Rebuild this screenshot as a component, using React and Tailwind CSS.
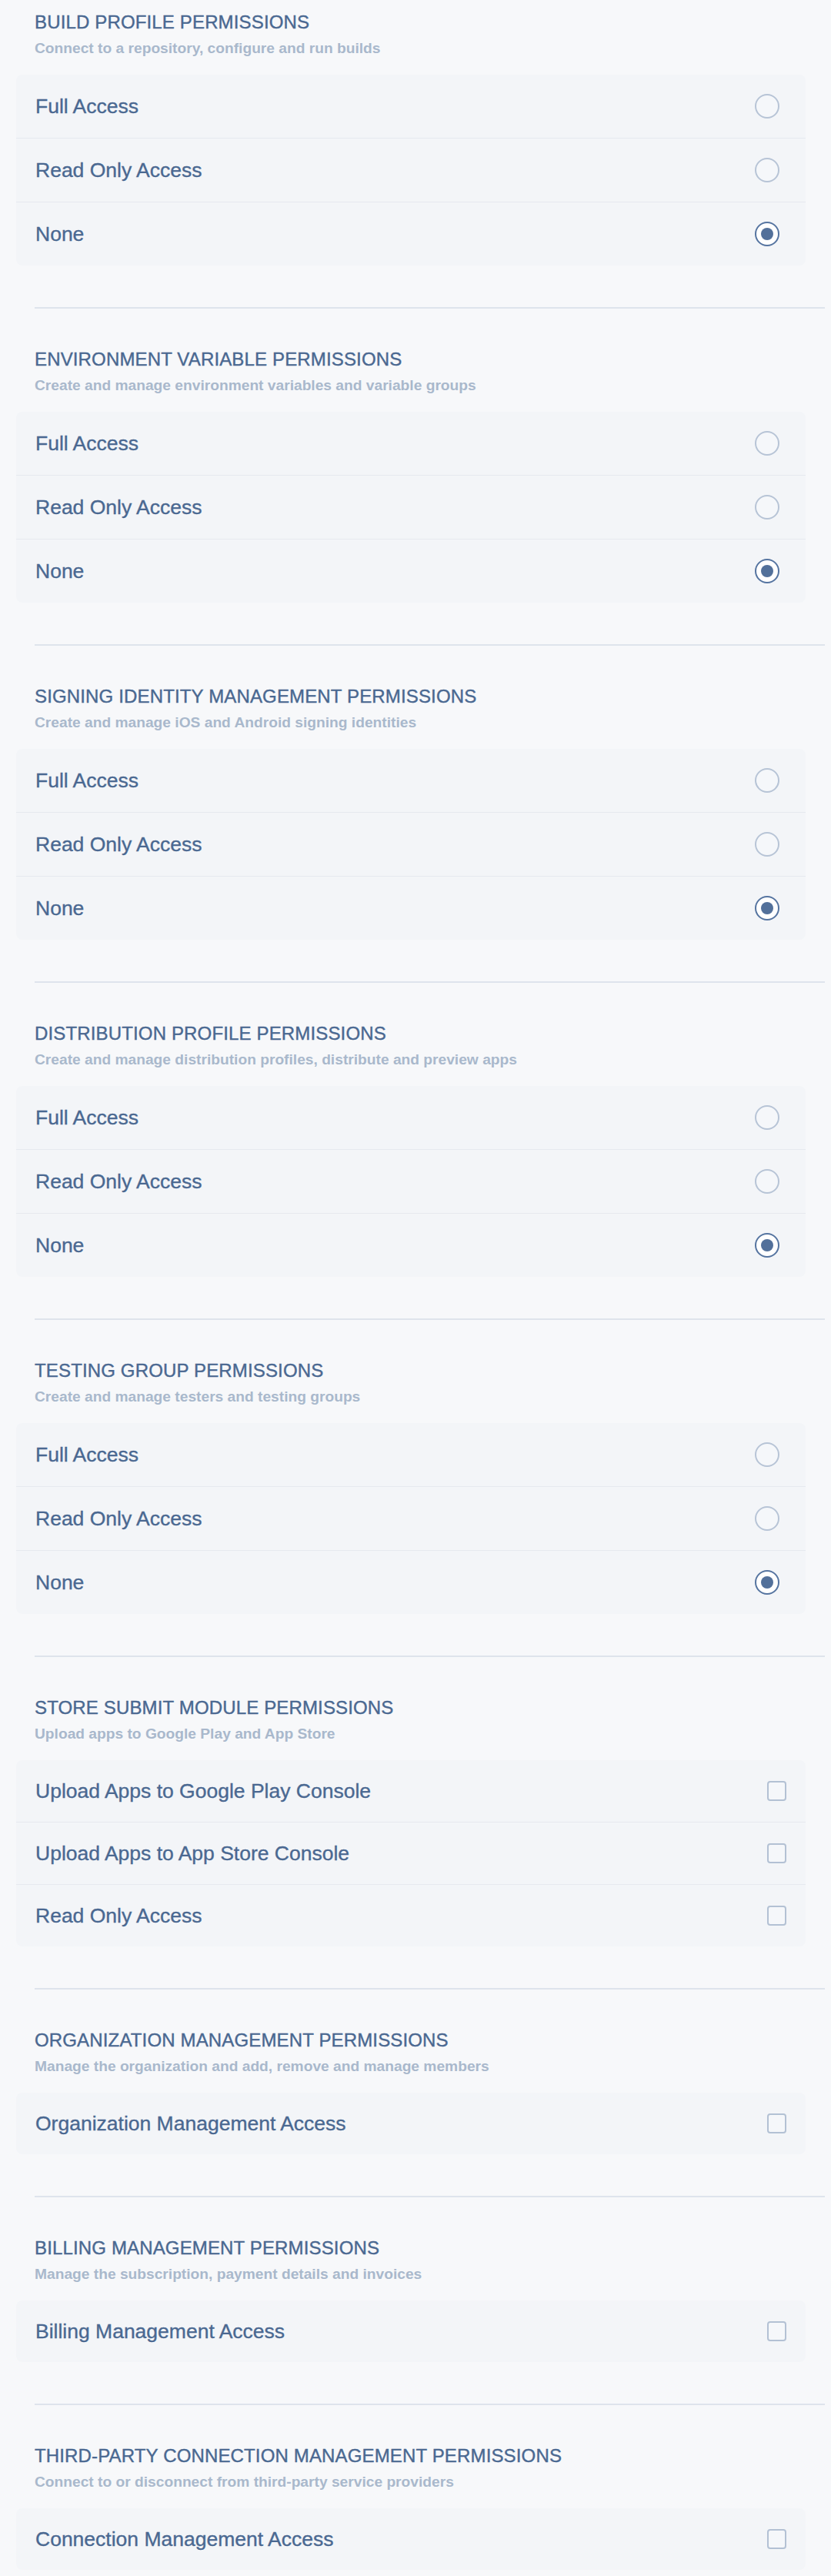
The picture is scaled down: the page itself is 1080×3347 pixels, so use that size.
import React from "react";

const sections = [
  {
    title: "BUILD PROFILE PERMISSIONS",
    subtitle: "Connect to a repository, configure and run builds",
    type: "radio",
    items: ["Full Access", "Read Only Access", "None"],
    selected: 2,
  },
  {
    title: "ENVIRONMENT VARIABLE PERMISSIONS",
    subtitle: "Create and manage environment variables and variable groups",
    type: "radio",
    items: ["Full Access", "Read Only Access", "None"],
    selected: 2,
  },
  {
    title: "SIGNING IDENTITY MANAGEMENT PERMISSIONS",
    subtitle: "Create and manage iOS and Android signing identities",
    type: "radio",
    items: ["Full Access", "Read Only Access", "None"],
    selected: 2,
  },
  {
    title: "DISTRIBUTION PROFILE PERMISSIONS",
    subtitle: "Create and manage distribution profiles, distribute and preview apps",
    type: "radio",
    items: ["Full Access", "Read Only Access", "None"],
    selected: 2,
  },
  {
    title: "TESTING GROUP PERMISSIONS",
    subtitle: "Create and manage testers and testing groups",
    type: "radio",
    items: ["Full Access", "Read Only Access", "None"],
    selected: 2,
  },
  {
    title: "STORE SUBMIT MODULE PERMISSIONS",
    subtitle: "Upload apps to Google Play and App Store",
    type: "check",
    items: [
      "Upload Apps to Google Play Console",
      "Upload Apps to App Store Console",
      "Read Only Access",
    ],
  },
  {
    title: "ORGANIZATION MANAGEMENT PERMISSIONS",
    subtitle: "Manage the organization and add, remove and manage members",
    type: "check",
    items: ["Organization Management Access"],
  },
  {
    title: "BILLING MANAGEMENT PERMISSIONS",
    subtitle: "Manage the subscription, payment details and invoices",
    type: "check",
    items: ["Billing Management Access"],
  },
  {
    title: "THIRD-PARTY CONNECTION MANAGEMENT PERMISSIONS",
    subtitle: "Connect to or disconnect from third-party service providers",
    type: "check",
    items: ["Connection Management Access"],
  },
];

function Radio({ checked }) {
  if (checked) {
    return (
      <span className="flex h-[32px] w-[32px] items-center justify-center rounded-full border-2 border-[#5574a0] bg-white">
        <span className="h-[16px] w-[16px] rounded-full bg-[#52709a]" />
      </span>
    );
  }
  return (
    <span className="block h-[32px] w-[32px] rounded-full border-2 border-[#b7c4d6] bg-[#f5f7fa]" />
  );
}

function Check() {
  return (
    <span className="block h-[26px] w-[25px] rounded-[4px] border-2 border-[#b3c1d4] bg-[#f5f7fa]" />
  );
}

function Section({ s }) {
  return (
    <section>
      <div className="pl-[45px] text-[24px] leading-[28px] tracking-[0.15px] text-[#4a6891] [-webkit-text-stroke:0.4px_#4a6891]">
        {s.title}
      </div>
      <div className="mt-[9px] pl-[45px] text-[19.2px] font-bold leading-[22px] text-[#a9b8cc]">
        {s.subtitle}
      </div>
      <div className="ml-[21px] mr-[33px] mt-[23px] flex flex-col rounded-[8px] bg-[#f3f5f8]">
        {s.items.map((it, i) => (
          <React.Fragment key={it}>
            {i > 0 && <div className="h-px bg-[#e6e9ef]" />}
            {s.type === "radio" ? (
              <div className="flex h-[82px] items-center justify-between pl-[25px] pr-[34px]">
                <span className="text-[26.5px] leading-[30px] text-[#4a6891] [-webkit-text-stroke:0.35px_#4a6891]">
                  {it}
                </span>
                <Radio checked={i === s.selected} />
              </div>
            ) : (
              <div className="flex h-[80px] items-center justify-between pl-[25px] pr-[25px]">
                <span className="text-[26.5px] leading-[30px] text-[#4a6891] [-webkit-text-stroke:0.35px_#4a6891]">
                  {it}
                </span>
                <Check />
              </div>
            )}
          </React.Fragment>
        ))}
      </div>
    </section>
  );
}

export default function App() {
  return (
    <div className="h-[3347px] overflow-hidden bg-[#f7f8fa] pt-[15px] font-['Liberation_Sans',Arial,sans-serif] antialiased">
      {sections.map((s, i) => (
        <React.Fragment key={s.title}>
          {i > 0 && (
            <div className="mb-[52px] ml-[45px] mr-[8px] mt-[54px] h-[2px] bg-[#dee4ec]" />
          )}
          <Section s={s} />
        </React.Fragment>
      ))}
    </div>
  );
}
